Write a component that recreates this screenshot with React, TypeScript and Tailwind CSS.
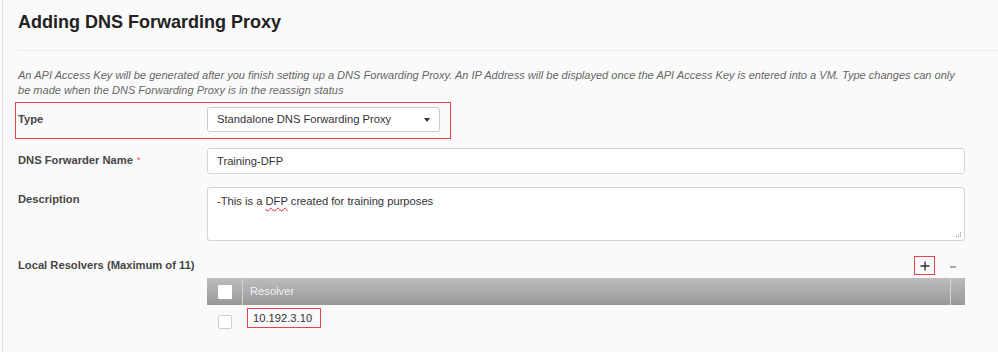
import React from "react";

function Label({ children, className = "" }: { children: React.ReactNode; className?: string }) {
  return (
    <div className={`w-[189px] shrink-0 text-[11.2px] font-bold text-[#464646] ${className}`}>{children}</div>
  );
}

function Grip() {
  return (
    <svg width="7" height="7" viewBox="0 0 7 7" className="absolute right-[2px] bottom-[2px]">
      <rect x="5" y="1" width="1" height="1" fill="#999" />
      <rect x="3" y="3" width="1" height="1" fill="#999" />
      <rect x="5" y="3" width="1" height="1" fill="#999" />
      <rect x="1" y="5" width="1" height="1" fill="#999" />
      <rect x="3" y="5" width="1" height="1" fill="#999" />
      <rect x="5" y="5" width="1" height="1" fill="#999" />
    </svg>
  );
}

export default function App() {
  return (
    <div className="h-[352px] w-full overflow-hidden bg-[#fafafa] pl-[2px] font-['Liberation_Sans',Arial,sans-serif]">
      <div className="h-full border-l border-[#e2e2e2] pl-[15px]">
        <h1 className="pt-[11px] text-[18px] leading-[22px] font-bold text-[#222]">Adding DNS Forwarding Proxy</h1>
        <div className="mt-[17px] h-px bg-[#ebebeb]" />

        <p className="mt-[17px] text-[11.05px] leading-[14.5px] italic text-[#666]">
          An API Access Key will be generated after you finish setting up a DNS Forwarding Proxy. An IP Address will be displayed once the API Access Key is entered into a VM. Type changes can only
          <br />
          be made when the DNS Forwarding Proxy is in the reassign status
        </p>

        {/* Type row (highlighted) */}
        <div className="mt-[5px] -ml-[3px] flex w-[436px] border border-[#e5434c] pt-[4px] pb-[6px] pl-[2px]">
          <Label className="leading-[24px]">Type</Label>
          <div className="flex h-[25px] w-[233px] items-center justify-between rounded-[3px] border border-[#cccccc] bg-white px-[9px] text-[11.2px] text-[#333]">
            <span>Standalone DNS Forwarding Proxy</span>
            <span className="h-0 w-0 border-x-[3px] border-t-[4px] border-x-transparent border-t-[#333]" />
          </div>
        </div>

        {/* DNS Forwarder Name */}
        <div className="mt-[9px] flex pr-[33px]">
          <Label className="leading-[24px]">
            DNS Forwarder Name<span className="ml-[4px] align-top text-[9px] font-normal text-[#e0474f]">*</span>
          </Label>
          <div className="flex h-[26px] flex-1 items-center rounded-[3px] border border-[#d4d4d4] bg-white pl-[9px] text-[11.2px] text-[#333]">
            Training-DFP
          </div>
        </div>

        {/* Description */}
        <div className="mt-[13px] flex pr-[33px]">
          <Label className="leading-[24px]">Description</Label>
          <div className="relative h-[54px] flex-1 rounded-[3px] border border-[#d4d4d4] bg-white pt-[6px] pl-[9px] text-[11.2px] leading-[14px] text-[#333]">
            -This is a <span className="underline decoration-wavy decoration-[#e02020] decoration-1 underline-offset-2">DFP</span> created for training purposes
            <Grip />
          </div>
        </div>

        {/* Local Resolvers */}
        <div className="mt-[15px] flex pr-[33px]">
          <Label className="leading-[19px]">Local Resolvers (Maximum of 11)</Label>
          <div className="flex-1">
            <div className="flex h-[19px] items-center justify-end pr-[9px]">
              <div className="flex h-[19px] w-[21px] items-center justify-center border border-[#e5434c]">
                <svg width="10" height="10" viewBox="0 0 10 10">
                  <path d="M5 0.5V9.5M0.5 5H9.5" stroke="#333" strokeWidth="1.4" />
                </svg>
              </div>
              <div className="ml-[15px] mt-[3px] h-[1.5px] w-[6px] bg-[#aaa]" />
            </div>
            <div className="mt-[3px] flex h-[27px] bg-linear-to-b from-[#bdbdbd] to-[#999999] text-[11.2px] text-[#f2f2f2]">
              <div className="flex w-[35px] shrink-0 items-center pl-[11px]">
                <div className="h-[14px] w-[14px] rounded-[1px] bg-white" />
              </div>
              <div className="w-px bg-[#d0d0d0]" />
              <div className="flex flex-1 items-center pl-[7px]">Resolver</div>
              <div className="w-px bg-[#d6d6d6]" />
              <div className="w-[14px] shrink-0" />
            </div>
            <div className="flex">
              <div className="w-[35px] shrink-0 pt-[10px] pl-[11px]">
                <div className="h-[14px] w-[14px] rounded-[2px] border border-[#cfcfcf] bg-white" />
              </div>
              <div className="ml-[5px] mt-[3px] flex h-[20px] w-[74px] items-center border border-[#e5434c] pl-[5px] text-[11.2px] text-[#333]">
                10.192.3.10
              </div>
            </div>
          </div>
        </div>
      </div>
    </div>
  );
}
